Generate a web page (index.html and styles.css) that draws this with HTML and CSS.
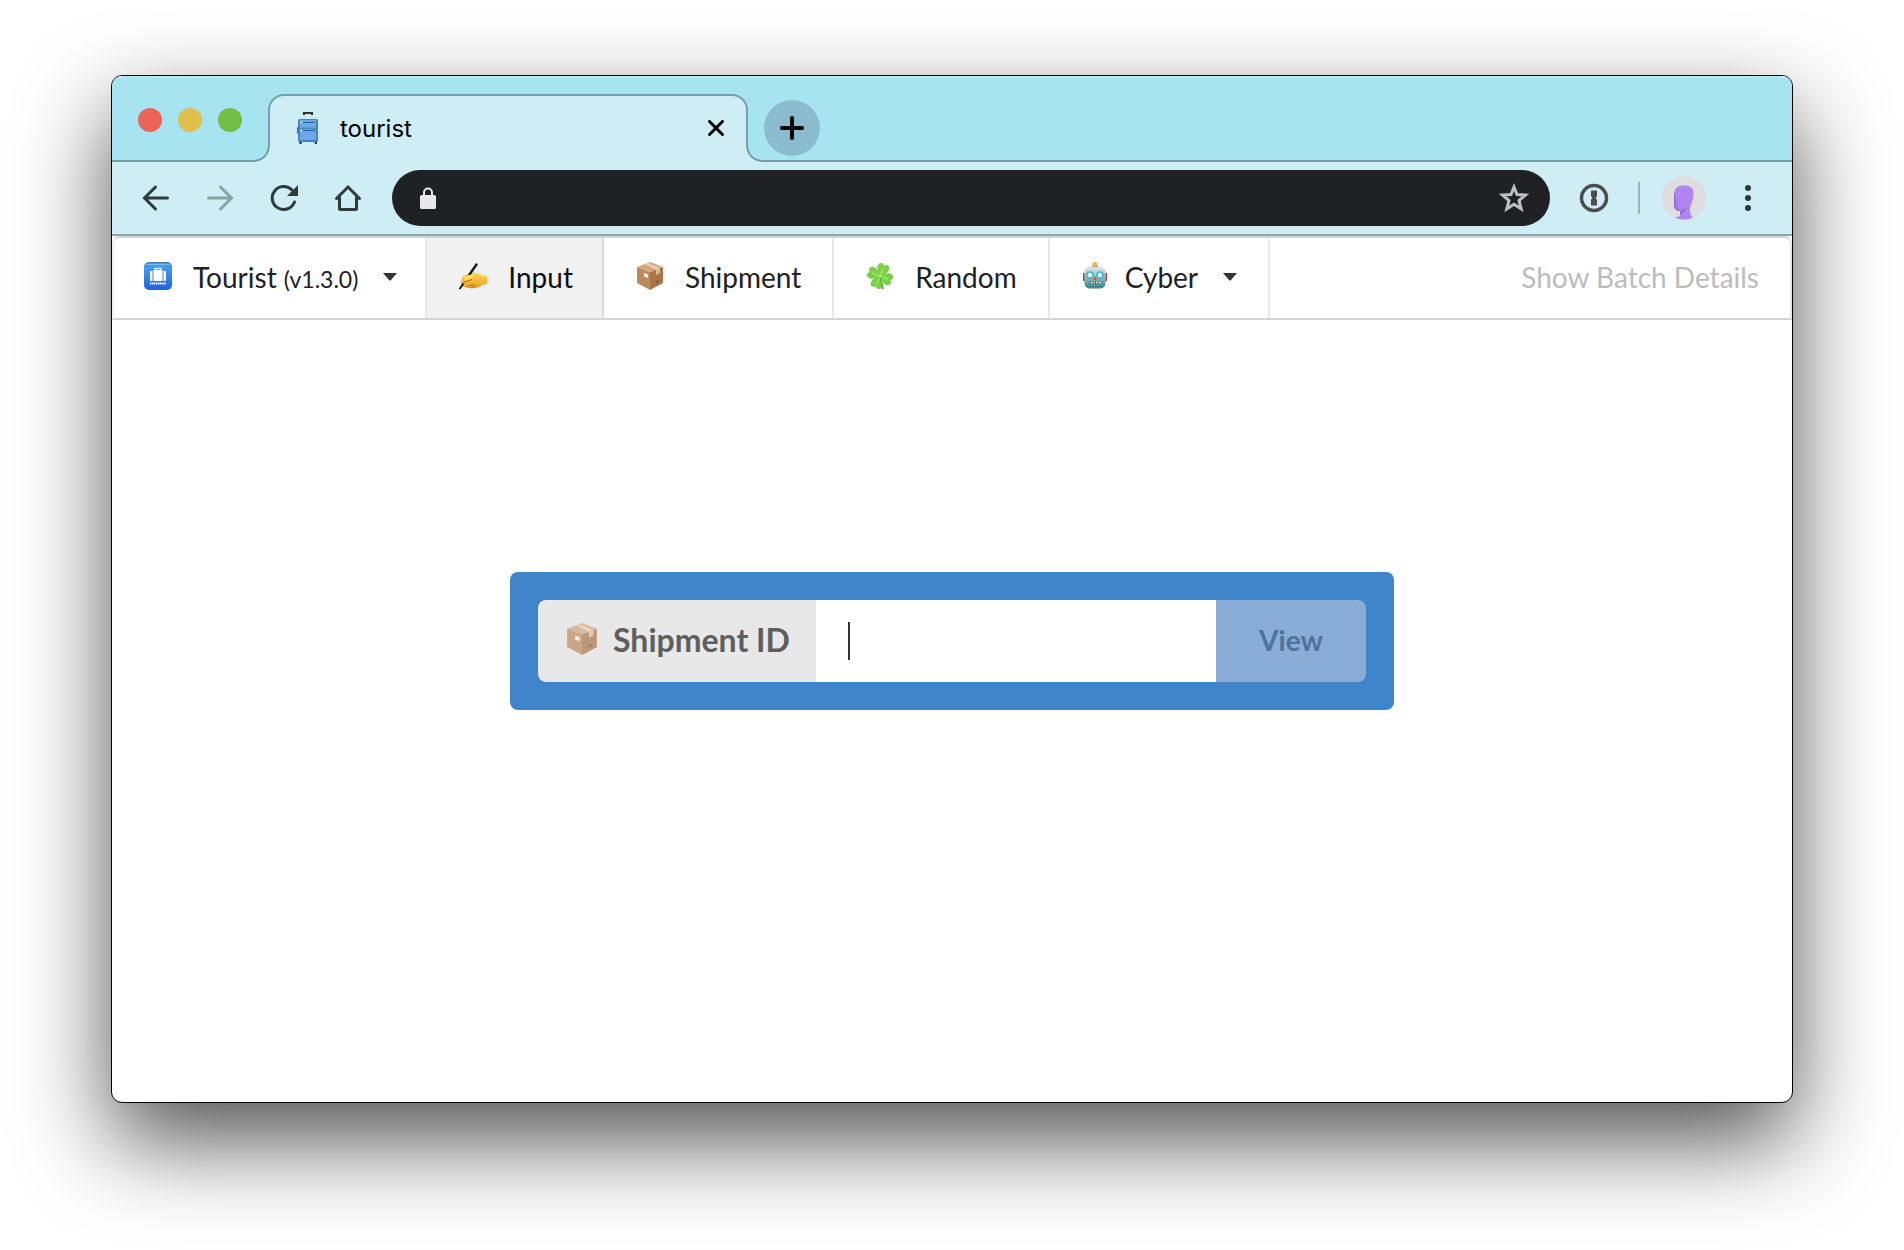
FILE: index.html
```html
<!DOCTYPE html>
<html lang="en">
<head>
  <meta charset="UTF-8" />
  <title>tourist</title>
  <link rel="stylesheet" href="styles.css">
</head>
<body>

<!-- shared drawings -->
<svg class="defs" aria-hidden="true">
  <symbol id="package" viewBox="0 0 28 28">
    <path d="M14 0 L27 5 L14 10 L1 5Z" fill="#d3a67c"/>
    <path d="M1 5 L14 10 V28 L1 21Z" fill="#bd8a60"/>
    <path d="M27 5 L14 10 V28 L27 21Z" fill="#a97548"/>
    <path d="M9 2 L12 1 L24 6 L20 8Z" fill="#e8cfb4"/>
    <path d="M20 8 L24 6 V11 L20 13Z" fill="#d9bc9f"/>
    <path d="M8 11 L12 12.500 V16 L8 14.500Z" fill="#eef1f4"/>
    <path d="M19 20 L23 18 L21.500 21Z" fill="#74482b"/>
  </symbol>
  <symbol id="caret" viewBox="0 0 14 8">
    <path d="M0 0 H14 L8 7 Q7 8 6 7Z" fill="#333435"/>
  </symbol>
</svg>

<main class="window">
  <header class="tabs">
    <div class="lights">
      <span class="light red"></span>
      <span class="light yellow"></span>
      <span class="light green"></span>
    </div>
    <div class="tab">
      <svg class="favicon" viewBox="0 0 32 32" aria-hidden="true">
        <path d="M12.500 7 V2 M19.500 7 V2" stroke="#d6dadd" stroke-width="1.500"/>
        <path d="M12 3 V1 H20 V3" fill="none" stroke="#2c3236" stroke-width="2"/>
        <rect x="5" y="15" width="3" height="7" rx="1" fill="#44637c"/>
        <path d="M7 29 h3 l-.5 3 h-2z M22 29 h3 v3 h-2z" fill="#2f3a44"/>
        <rect x="6" y="7" width="20" height="23" rx="1.500" fill="#4485c4"/>
        <rect x="8" y="8" width="16" height="20" fill="#6ba8e5"/>
        <path d="M6 16.500 H26" stroke="#4485c4" stroke-width="1.500"/>
        <path d="M11 10.500 H23 M11 18.500 H23" stroke="#315f92" stroke-width="1"/>
        <path d="M8.500 10.500 h1.500 M8.500 18.500 h1.500" stroke="#fff" stroke-width="1.500"/>
      </svg>
      <span class="tab-title">tourist</span>
      <button class="tab-close" type="button" aria-label="Close tab">
        <svg viewBox="0 0 16 16" width="16" height="16"><path d="M1.500 1.500 L14.500 14.500 M14.500 1.500 L1.500 14.500" stroke="#000" stroke-width="3" stroke-linecap="round"/></svg>
      </button>
    </div>
    <button class="new-tab" type="button" aria-label="New tab">
      <svg viewBox="0 0 24 24" width="24" height="24"><path d="M12 2 V22 M2 12 H22" stroke="#000" stroke-width="4" stroke-linecap="round"/></svg>
    </button>
  </header>

  <div class="toolbar">
    <button class="tool" type="button" aria-label="Back">
      <svg viewBox="0 0 28 28" width="28" height="28"><path d="M25.500 14 H3 M13.500 3 L2.500 14 L13.500 25" fill="none" stroke="#2e3b38" stroke-width="3" stroke-linecap="round"/></svg>
    </button>
    <button class="tool" type="button" aria-label="Forward" disabled>
      <svg viewBox="0 0 28 28" width="28" height="28"><path d="M2.500 14 H25 M14.500 3 L25.500 14 L14.500 25" fill="none" stroke="#8ba2a5" stroke-width="3" stroke-linecap="round"/></svg>
    </button>
    <button class="tool" type="button" aria-label="Reload">
      <svg viewBox="0 0 28 28" width="28" height="28"><path d="M24.500 18 A11.500 11.500 0 1 1 22 6" fill="none" stroke="#2e3b38" stroke-width="3" stroke-linecap="round"/><path d="M28 1 V12 H17Z" fill="#2e3b38"/></svg>
    </button>
    <button class="tool" type="button" aria-label="Home">
      <svg viewBox="0 0 28 28" width="28" height="28"><path d="M2.500 14.500 L14 3 L25.500 14.500 M5.500 13 V24.500 Q5.500 25.500 6.500 25.500 H21.500 Q22.500 25.500 22.500 24.500 V13" fill="none" stroke="#2e3b38" stroke-width="3" stroke-linecap="round"/></svg>
    </button>
    <div class="address">
      <svg viewBox="0 0 16 22" width="16" height="22" aria-hidden="true"><path d="M4 9 V5.500 a4 4 0 0 1 8 0 V9" fill="none" stroke="#e8e8e8" stroke-width="2"/><rect y="8" width="16" height="14" rx="1.500" fill="#e8e8e8"/></svg>
      <input class="address-input" type="text" aria-label="Address">
      <button class="star" type="button" aria-label="Bookmark this page">
        <svg viewBox="0 0 30 30" width="30" height="30"><path d="M15 4 L18 11.500 L26.500 12 L20 17.500 L22.200 26 L15 21.300 L7.800 26 L10 17.500 L3.500 12 L12 11.500Z" fill="none" stroke="#bdc1c4" stroke-width="3"/></svg>
      </button>
    </div>
    <button class="tool" type="button" aria-label="Password manager">
      <svg viewBox="0 0 30 30" width="30" height="30"><circle cx="15" cy="15" r="12.500" fill="none" stroke="#4c4c4c" stroke-width="3.500"/><path d="M12 7.500 H18 V13.500 L16.500 15 L18 17 V22.500 H12 V16.500 L13.500 15 L12 13Z" fill="#4c4c4c"/></svg>
    </button>
    <span class="separator"></span>
    <button class="tool" type="button" aria-label="Profile">
      <svg viewBox="0 0 44 44" width="44" height="44"><circle cx="22" cy="22" r="22" fill="#dedede"/><path d="M12.500 17 C12.500 11 17 9.500 22 9.500 C28 9.500 32 12 31.500 18 C31 26 28.500 28 28 33 C28 38 29 40 31 41.500 Q22 46 13 41.500 Q18 40.500 18.500 39 V35 C14 35 12.500 33 12.500 30Z" fill="#b085f2"/><path d="M12.500 17 V30 Q13 34.500 17.500 34.500 M18.500 35 V39 L24 33 L19 35" fill="#8c68cf" fill-opacity=".4" stroke="#8c68cf" stroke-width="1"/></svg>
    </button>
    <button class="tool" type="button" aria-label="Browser menu">
      <svg viewBox="0 0 8 28" width="8" height="28"><g fill="#2e3b38"><circle cx="4" cy="4" r="3"/><circle cx="4" cy="14" r="3"/><circle cx="4" cy="24" r="3"/></g></svg>
    </button>
  </div>

  <nav class="menu">
    <button class="item brand" type="button" aria-haspopup="true">
      <svg class="icon" viewBox="0 0 28 28" aria-hidden="true">
        <defs><linearGradient id="blue" x2="0" y2="1"><stop stop-color="#3c7fc0"/><stop offset=".2" stop-color="#459ce8"/><stop offset="1" stop-color="#2060e8"/></linearGradient></defs>
        <rect width="28" height="28" rx="5" fill="url(#blue)"/>
        <path d="M3 2.500 H25" stroke="#78bdf0" stroke-width="1.500" stroke-linecap="round"/>
        <path d="M11 8 V6.500 H17 V8" fill="none" stroke="#d8ecff" stroke-width="1.500"/>
        <path d="M9.500 8 H18.500 V19 H9.500Z M6 9 H8.500 V19 H7 Q6 19 6 18Z M19.500 9 H22 V18 Q22 19 21 19 H19.500Z" fill="#fff"/>
        <path d="M6 21.500 H22" stroke="#fff" stroke-width="2" stroke-dasharray="1.500 .5"/>
      </svg>
      <span>Tourist <span class="version">(v1.3.0)</span></span>
      <svg class="caret" aria-hidden="true"><use href="#caret"/></svg>
    </button>
    <a class="item active" href="#input">
      <svg class="icon" viewBox="0 0 28 28" aria-hidden="true">
        <defs><linearGradient id="hand" x2="0" y2="1"><stop stop-color="#ffd95a"/><stop offset="1" stop-color="#ed9e20"/></linearGradient></defs>
        <path d="M2 19 Q3 13 9 12 L14 11 Q18 10 21 12 L24 14 H28 V22 Q24 22 20 25 Q16 27 11 26 L5 25 Q1 24 2 19Z" fill="url(#hand)"/>
        <path d="M5 20 L13 17.500 M8 25 L15 22 M12 26 L17 23.500" stroke="#b26d18" stroke-width="1"/>
        <path d="M17.500 2.500 L9.500 14" stroke="#1b1b1b" stroke-width="2.500" stroke-linecap="round"/>
        <path d="M4 22 L1 26.500" stroke="#1b1b1b" stroke-width="2" stroke-linecap="round"/>
        <path d="M5 17 Q8 12 13 13 Q15 15 11 17 L6 19Z" fill="#ffdb61"/>
      </svg>
      <span>Input</span>
    </a>
    <a class="item" href="#shipment">
      <svg class="icon" aria-hidden="true"><use href="#package"/></svg>
      <span>Shipment</span>
    </a>
    <a class="item" href="#random">
      <svg class="icon" viewBox="0 0 28 28" aria-hidden="true">
        <path d="M14 13 Q15 21 17 27" fill="none" stroke="#65a63c" stroke-width="2"/>
        <g fill="#79cf45">
          <path id="leaf" d="M14 14 C11 11 8 9 8 5 C8 1 12 0 14 3 C16 0 20 1 20 5 C20 9 17 11 14 14Z" transform="rotate(22 14 14)"/>
          <use href="#leaf" transform="rotate(90 14 14)"/>
          <use href="#leaf" transform="rotate(180 14 14)"/>
          <use href="#leaf" transform="rotate(270 14 14)"/>
        </g>
        <path d="M17 6 L14 14 L22 17 M11 22 L14 14 L6 11" fill="none" stroke="#b6ef76" stroke-width="1"/>
        <path d="M14 15 Q15 21 17 27" fill="none" stroke="#65a63c" stroke-width="1"/>
      </svg>
      <span>Random</span>
    </a>
    <button class="item compact" type="button" aria-haspopup="true">
      <svg class="icon" viewBox="0 0 28 28" aria-hidden="true">
        <defs><linearGradient id="robot" x2="0" y2="1"><stop stop-color="#d9e8e9"/><stop offset=".5" stop-color="#8fb9bc"/><stop offset="1" stop-color="#37808a"/></linearGradient></defs>
        <path d="M1 11 h3 v8 h-3z M22 11 h3 v8 h-3z" fill="#bd4146"/>
        <path d="M10 6 Q10 3 13 3 Q16 3 16 6Z" fill="#694a91"/>
        <circle cx="13" cy="2.500" r="2.500" fill="#f3b446"/>
        <rect x="2.500" y="5" width="21" height="21.500" rx="5" fill="url(#robot)"/>
        <circle cx="8" cy="13" r="3" fill="#fff" stroke="#36b7d4" stroke-width="1.500"/>
        <circle cx="18" cy="13" r="3" fill="#fff" stroke="#36b7d4" stroke-width="1.500"/>
        <path d="M13 14 L15 18 H11Z" fill="#df4b43"/>
        <path d="M8.500 20.500 H18" stroke="#574943" stroke-width="3"/>
        <path d="M9 20.500 H18" stroke="#fff" stroke-width="2" stroke-dasharray="1.500 1"/>
      </svg>
      <span>Cyber</span>
      <svg class="caret" aria-hidden="true"><use href="#caret"/></svg>
    </button>
    <button class="item details" type="button" disabled>Show Batch Details</button>
  </nav>

  <section class="page">
    <form class="search">
      <label class="search-label" for="shipment-id">
        <svg class="label-icon" aria-hidden="true"><use href="#package"/></svg>
        Shipment ID
      </label>
      <input class="search-input" type="text" id="shipment-id" name="shipment_id">
      <button class="search-button" type="submit" disabled>View</button>
    </form>
  </section>
</main>

</body>
</html>
```
FILE: styles.css
```css
* {
  box-sizing: border-box;
}
body {
  margin: 0;
  min-height: 100vh;
  padding: 75px 111px 147px;
  display: flex;
  background: #fff;
  font-family: Lato, sans-serif;
  font-size: 28px;
  overflow-x: hidden;
}
button, input {
  font: inherit;
  border: none;
  padding: 0;
  background: none;
}
svg {
  display: block;
  flex: none;
}
.defs {
  position: absolute;
  width: 0;
  height: 0;
}
.window {
  flex: 1;
  min-width: 0;
  display: flex;
  flex-direction: column;
  background: #fff;
  border: 1px solid #000;
  border-radius: 11px;
  overflow: hidden;
  box-shadow: 0 38px 92px rgba(0, 0, 0, 0.68);
}

/* tab strip */
.tabs {
  display: flex;
  align-items: center;
  height: 86px;
  padding-top: 18px;
  background: #a6e4f0;
  border-bottom: 2px solid #759fa9;
  box-shadow: inset 0 2px 0 #b8e9f3;
}
.lights {
  display: flex;
  gap: 16px;
  width: 156px;
  padding: 0 0 14px 26px;
}
.light {
  width: 24px;
  height: 24px;
  border-radius: 50%;
}
.red {
  background: #ed655a;
}
.yellow {
  background: #e0c04c;
}
.green {
  background: #72be47;
}
.tab {
  position: relative;
  display: flex;
  align-items: center;
  gap: 16px;
  width: 480px;
  height: 68px;
  margin-bottom: -2px;
  padding: 0 22px 2px;
  background: #ceedf5;
  border: 2px solid #759fa9;
  border-bottom: none;
  border-radius: 16px 16px 0 0;
}
.tab::before, .tab::after {
  content: "";
  position: absolute;
  bottom: 0;
  width: 16px;
  height: 16px;
}
.tab::before {
  left: -16px;
  background: radial-gradient(circle at 0 0, #a6e4f0 13.5px, #759fa9 14px, #759fa9 15.5px, #ceedf5 16px);
}
.tab::after {
  right: -16px;
  background: radial-gradient(circle at 100% 0, #a6e4f0 13.5px, #759fa9 14px, #759fa9 15.5px, #ceedf5 16px);
}
.favicon {
  width: 32px;
  height: 32px;
}
.tab-title {
  flex: 1;
  font-family: Inter, sans-serif;
  font-size: 24px;
}
.new-tab {
  display: grid;
  place-items: center;
  width: 56px;
  height: 56px;
  margin: 2px 0 0 16px;
  border-radius: 50%;
  background: #8bbbcf;
}

/* toolbar */
.toolbar {
  display: flex;
  align-items: center;
  height: 74px;
  padding: 0 12px;
  background: #ceedf5;
  border-bottom: 2px solid #8fa5ab;
}
.tool {
  display: grid;
  place-items: center;
  width: 64px;
  height: 56px;
}
.address {
  flex: 1;
  display: flex;
  align-items: center;
  gap: 16px;
  height: 56px;
  margin: 0 12px;
  padding: 0 21px 0 28px;
  background: #202124;
  border-radius: 28px;
}
.address-input {
  flex: 1;
  min-width: 0;
  color: #e8e8e8;
  outline: none;
}
.separator {
  width: 2px;
  height: 32px;
  margin: 0 12px;
  background: #9bb4ba;
}

/* menu */
.menu {
  display: flex;
  height: 84px;
  border: 2px solid #d4d4d5;
  border-left-color: #f0f0f0;
  border-right-color: #e8e8e8;
  border-radius: 8px 8px 0 0;
}
.item {
  display: flex;
  align-items: center;
  gap: 21px;
  padding: 0 31px 2px 32px;
  border-right: 2px solid #e8e8e8;
  color: #202122;
  text-decoration: none;
  white-space: nowrap;
}
.brand {
  padding-left: 30px;
  padding-right: 28px;
}
.active {
  padding-right: 29px;
  background: #f1f1f1;
  border-color: #dcdcdc;
  color: #0d0d0d;
}
.compact {
  gap: 15px;
}
.details {
  margin-left: auto;
  border: none;
  color: #bcbcbd;
}
.icon {
  width: 28px;
  height: 28px;
  margin-bottom: 2px;
}
.version {
  font-size: 23px;
}
.caret {
  width: 14px;
  height: 8px;
  margin-left: 4px;
}
.compact .caret {
  margin-left: 10px;
}

/* shipment form */
.page {
  flex: 1;
  padding-top: 252px;
}
.search {
  display: flex;
  width: 884px;
  max-width: 100%;
  margin: 0 auto;
  padding: 28px;
  background: #4085ca;
  border-radius: 8px;
}
.search-label {
  display: flex;
  align-items: center;
  gap: 15px;
  width: 278px;
  height: 82px;
  padding: 0 0 3px 28px;
  background: #e8e8e8;
  border-radius: 8px 0 0 8px;
  color: #5e5e5e;
  font-size: 32px;
  font-weight: bold;
}
.label-icon {
  width: 32px;
  height: 32px;
  margin-bottom: 2px;
  opacity: 0.7;
}
.search-input {
  flex: 1;
  min-width: 0;
  padding: 0 32px;
  /* resting text cursor */
  background: linear-gradient(#333, #333) 32px center / 2px 38px no-repeat #fff;
  font-size: 32px;
  outline: none;
}
.search-input:focus {
  background: #fff;
}
.search-button {
  width: 150px;
  padding-bottom: 3px;
  background: #89add6;
  border-radius: 0 8px 8px 0;
  color: #4a739e;
  font-weight: bold;
}
```
